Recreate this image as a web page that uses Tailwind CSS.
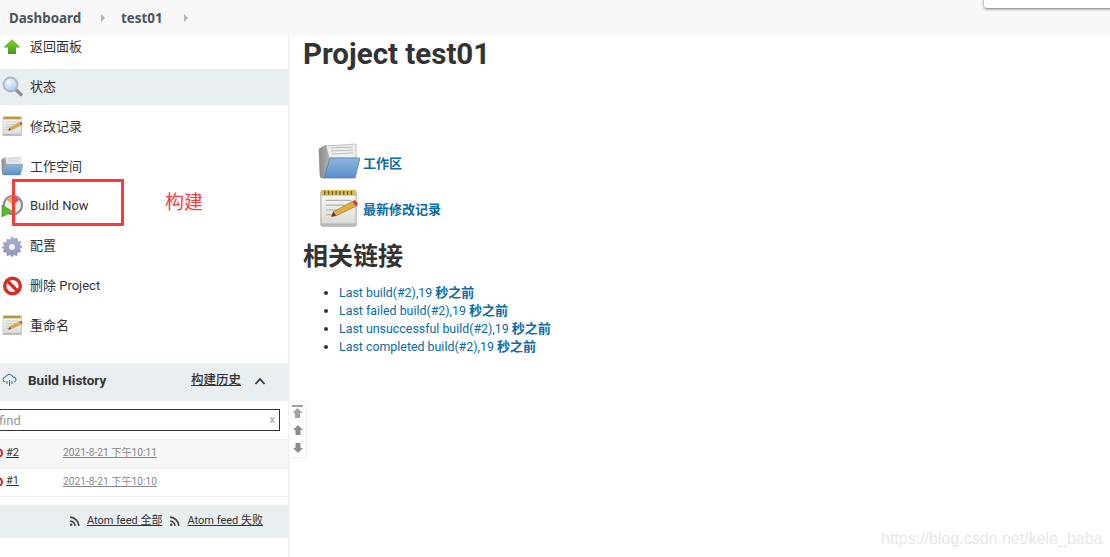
<!DOCTYPE html>
<html lang="zh-CN">
<head>
  <meta charset="UTF-8" />
  <title>test01 - Jenkins</title>
  <script src="https://cdn.jsdelivr.net/npm/@tailwindcss/browser@4"></script>
</head>
<body class="relative h-[557px] w-[1110px] overflow-hidden bg-white font-['Roboto','Noto_Sans_CJK_SC',sans-serif] text-[13px] text-[#333]">

  <svg class="absolute h-0 w-0">
    <defs>
      <linearGradient id="noteEdge" x1="0" y1="0" x2="0" y2="1"><stop offset="0" stop-color="#fbfbf8"/><stop offset="1" stop-color="#d8d8d5"/></linearGradient>
      <linearGradient id="folderBlue" x1="0" y1="0" x2="0" y2="1"><stop offset="0" stop-color="#8fb5df"/><stop offset="1" stop-color="#5a8fca"/></linearGradient>
      <linearGradient id="folderBack" x1="0" y1="0" x2="1" y2="0"><stop offset="0" stop-color="#8a8a8a"/><stop offset="1" stop-color="#b5b5b5"/></linearGradient>
      <linearGradient id="greenUp" x1="0" y1="0" x2="0" y2="1"><stop offset="0" stop-color="#8ed13a"/><stop offset="1" stop-color="#3f9a10"/></linearGradient>
      <linearGradient id="gearFill" x1="0" y1="0" x2="0" y2="1"><stop offset="0" stop-color="#aab4da"/><stop offset="1" stop-color="#9094b6"/></linearGradient>
      <radialGradient id="lens" cx=".35" cy=".3" r=".8"><stop offset="0" stop-color="#eef5fc"/><stop offset="1" stop-color="#a9c8e8"/></radialGradient>
      <symbol id="notepad" viewBox="0 0 42 42">
        <rect x="2" y="2" width="37" height="37" rx="1.500" fill="url(#noteEdge)" stroke="#a5a5a5"/>
        <rect x="2" y="1" width="37" height="6" fill="#d8bd5c"/>
        <path d="M6 2v4M10 2v4M14 2v4M18 2v4M22 2v4M26 2v4M30 2v4M34 2v4" stroke="#6f5a1c" stroke-width="1.500"/>
        <path d="M7 12h27M7 17h20M7 22h14M7 27h8" stroke="#b0b0b0" stroke-width="1.200"/>
        <path d="M13 29 L15 24 L35 13 L39 18 L18 28 Z" fill="#e3aa3f" stroke="#94681a" stroke-width=".6"/>
        <path d="M35 13 L38 11.500 L41 16 L39 18 Z" fill="#d63a2e"/>
        <path d="M13 29 L15 24 L18 28 Z" fill="#444"/>
        <rect x="2" y="36" width="37" height="3" fill="#b8b8b5"/>
      </symbol>
      <symbol id="folder" viewBox="0 0 42 38">
        <path d="M1 6 L8 2 L12 15 L7 35 L4 35 Q2 35 2 32 Z" fill="url(#folderBack)" stroke="#7a7a7a" stroke-width=".5"/>
        <path d="M8 3 L38 1 L38 15 L11 15 Z" fill="#eeeeee" stroke="#a8a8a8" stroke-width=".7"/>
        <path d="M13 5 L35 4 M13 8 L35 7 M14 11 L35 10" stroke="#bdbdbd"/>
        <path d="M12 15 L42 15 L37 35 L6 35 Z" fill="url(#folderBlue)" stroke="#4a78ad" stroke-width=".7"/>
      </symbol>
      <symbol id="buildIcon" viewBox="0 0 24 24">
        <circle cx="13" cy="11" r="10" fill="#f1eee4" stroke="#8d8aa6" stroke-width="2.400"/>
        <path d="M13 11 L6 5 A9 9 0 0 1 15 2 Z" fill="#e8b04a"/>
        <path d="M13 11 L15 2 A9 9 0 0 1 20 5.500 Z" fill="#d9574a"/>
        <path d="M1 11 L13 18 L1 24 Z" fill="#5cb82e" stroke="#3f8a1b" stroke-width=".6"/>
      </symbol>
    </defs>
  </svg>

  <!-- breadcrumb -->
  <header class="relative z-10 flex h-9 items-center bg-[#f8f8f8] pl-[9px] font-['Noto_Sans',sans-serif] text-[13.4px] font-bold text-[#4d545d]">
    <span class="w-[92px]">Dashboard</span>
    <span class="h-0 w-0 border-y-[4px] border-l-[4px] border-y-transparent border-l-[#b4b4b4]"></span>
    <span class="ml-[16px] w-[63px]">test01</span>
    <span class="h-0 w-0 border-y-[4px] border-l-[4px] border-y-transparent border-l-[#b4b4b4]"></span>
    <div class="absolute -top-2 left-[984px] h-4 w-[140px] rounded-[3px] bg-white shadow-[0_1px_3px_rgba(0,0,0,0.55)]"></div>
  </header>

  <div class="flex h-[521px]">
    <!-- side panel -->
    <aside class="flex w-[290px] shrink-0 flex-col border-r-2 border-[#f0f3f5]">
      <nav class="-mt-[7px] flex flex-col gap-[3.75px]">
        <a class="flex h-9 items-center gap-[6px] pl-[3px]">
          <svg class="h-[18px] w-[18px] shrink-0" viewBox="0 0 18 18"><path d="M9 1 L17.500 9.500 L13 9.500 L13 16 L5 16 L5 9.500 L.5 9.500 Z" fill="url(#greenUp)"/></svg>
          <span class="ml-[3px]">返回面板</span>
        </a>
        <a class="flex h-9 items-center gap-[7px] bg-[#e9eef1] pl-[2px]">
          <svg class="h-[21px] w-[21px] shrink-0" viewBox="0 0 21 21"><path d="M13 13 L19 18.500" stroke="#8f8f8f" stroke-width="3.400" stroke-linecap="round"/><circle cx="8.500" cy="8.500" r="7" fill="url(#lens)" stroke="#a9b8c6" stroke-width="1.800"/></svg>
          <span>状态</span>
        </a>
        <a class="flex h-9 items-center gap-[7px] pl-[2px]">
          <svg class="h-[21px] w-[21px] shrink-0"><use href="#notepad"/></svg>
          <span>修改记录</span>
        </a>
        <a class="flex h-9 items-center gap-[7px] pl-[1px]">
          <svg class="h-[21px] w-[22px] shrink-0"><use href="#folder"/></svg>
          <span>工作空间</span>
        </a>
        <a class="flex h-9 items-center gap-[7px] pl-[1px]">
          <svg class="h-[22px] w-[22px] shrink-0"><use href="#buildIcon"/></svg>
          <span>Build Now</span>
        </a>
        <a class="flex h-9 items-center gap-[7px] pl-[1px]">
          <svg class="h-[22px] w-[22px] shrink-0" viewBox="0 0 24 24"><path d="M12 1.500l2 3.200 3.400-1.400.5 3.700 3.700.6-1.400 3.400 3 1.900-3 2.100 1.400 3.400-3.700.5-.6 3.700-3.400-1.400-1.900 2.700-2-2.700-3.400 1.400-.5-3.700-3.700-.6 1.400-3.400L.8 14l3-2-1.400-3.400 3.700-.5.6-3.700 3.400 1.400z" fill="url(#gearFill)" stroke="#8a8fae" stroke-width=".6"/><circle cx="12" cy="13" r="3.200" fill="#f4f4f8"/></svg>
          <span>配置</span>
        </a>
        <a class="flex h-9 items-center gap-[7px] pl-[2px]">
          <svg class="h-[20px] w-[21px] shrink-0" viewBox="0 0 20 20"><circle cx="10" cy="10" r="7.800" fill="#fff" stroke="#d2302a" stroke-width="3.400"/><path d="M4.500 4.500 L15.500 15.500" stroke="#d2302a" stroke-width="3.400"/></svg>
          <span>删除 Project</span>
        </a>
        <a class="flex h-9 items-center gap-[7px] pl-[2px]">
          <svg class="h-[21px] w-[21px] shrink-0"><use href="#notepad"/></svg>
          <span>重命名</span>
        </a>
      </nav>

      <!-- build history -->
      <section class="mt-[19.75px] flex-1">
        <div class="flex h-[38px] items-center bg-[#e9eef1] pb-[3px] pl-[2px] pr-[22px]">
          <svg class="h-[13px] w-[15px]" viewBox="0 0 15 13" fill="none" stroke="#2e6d9e" stroke-width="1"><path d="M3.500 8 A2.500 2.500 0 0 1 3.500 3 A4 4 0 0 1 11 3 A2.500 2.500 0 0 1 12 8"/><path d="M5 7v3M7.500 6v6M10 7v3"/></svg>
          <span class="ml-[11px] text-[13.5px] font-bold text-[#333]">Build History</span>
          <a class="ml-auto text-[12.5px] font-medium underline">构建历史</a>
          <svg class="ml-[13px] h-[10px] w-[12px]" viewBox="0 0 12 10" fill="none" stroke="#333" stroke-width="1.800"><path d="M1.500 8 L6 3 L10.500 8"/></svg>
        </div>
        <div class="-ml-1 mr-[8px] mt-2 flex h-[22px] items-center justify-between border border-[#333] bg-white pl-[2px] pr-[4px] pt-[2px] text-[#999]">
          <span>find</span><span class="-mt-[2px] text-[11px]">x</span>
        </div>
        <div class="mt-2 border-t border-[#eceff1] text-[11px]">
          <div class="flex h-[29px] items-center border-b border-[#eceff1] bg-[#f6f6f6] pb-[2px]">
            <span class="-ml-[7px] h-[10px] w-[10px] rounded-full border-2 border-[#d2202a] bg-white"></span>
            <a class="ml-[3px] w-[57px] underline">#2</a>
            <a class="text-[10.2px] text-[#888] underline">2021-8-21 下午10:11</a>
          </div>
          <div class="flex h-[28px] items-center border-b border-[#eceff1] pb-[2px]">
            <span class="-ml-[7px] h-[10px] w-[10px] rounded-full border-2 border-[#d2202a] bg-white"></span>
            <a class="ml-[3px] w-[57px] underline">#1</a>
            <a class="text-[10.2px] text-[#888] underline">2021-8-21 下午10:10</a>
          </div>
        </div>
        <div class="mt-2 flex h-[33px] items-center justify-end gap-[7px] bg-[#e9eef1] pr-[25px] text-[11px]">
          <svg class="h-[11px] w-[11px]" viewBox="0 0 10 10" fill="none" stroke="#444" stroke-width="1.500"><path d="M1 4.500a5 5 0 0 1 4.500 4.500M1 1a8.500 8.500 0 0 1 8 8"/><circle cx="2" cy="8" r="1.100" fill="#444" stroke="none"/></svg>
          <a class="underline">Atom feed 全部</a>
          <svg class="h-[11px] w-[11px]" viewBox="0 0 10 10" fill="none" stroke="#444" stroke-width="1.500"><path d="M1 4.500a5 5 0 0 1 4.500 4.500M1 1a8.500 8.500 0 0 1 8 8"/><circle cx="2" cy="8" r="1.100" fill="#444" stroke="none"/></svg>
          <a class="underline">Atom feed 失败</a>
        </div>
      </section>
    </aside>

    <!-- main panel -->
    <main class="pl-[13px]">
      <h1 class="text-[29.5px] leading-[36px] font-bold text-[#333]">Project test01</h1>
      <div class="mt-[71px] ml-[15px] flex h-[38px] gap-[3px]">
        <svg class="h-[38px] w-[42px] shrink-0"><use href="#folder"/></svg>
        <a class="pt-[11px] font-semibold text-[#0b6aa2]">工作区</a>
      </div>
      <div class="mt-[8px] ml-[15px] flex h-[40px] gap-[3px]">
        <svg class="h-[40px] w-[42px] shrink-0"><use href="#notepad"/></svg>
        <a class="pt-[11px] font-semibold text-[#0b6aa2]">最新修改记录</a>
      </div>
      <h2 class="mt-[9px] text-[25px] leading-[38px] font-bold text-[#333]">相关链接</h2>
      <ul class="mt-[8px] ml-[36px] list-disc text-[12.4px] leading-[18px] text-[#333]">
        <li><a class="text-[#0b6aa2]">Last build(#2),19 <span class="text-[13px] font-semibold">秒之前</span></a></li>
        <li><a class="text-[#0b6aa2]">Last failed build(#2),19 <span class="text-[13px] font-semibold">秒之前</span></a></li>
        <li><a class="text-[#0b6aa2]">Last unsuccessful build(#2),19 <span class="text-[13px] font-semibold">秒之前</span></a></li>
        <li><a class="text-[#0b6aa2]">Last completed build(#2),19 <span class="text-[13px] font-semibold">秒之前</span></a></li>
      </ul>
    </main>
  </div>

  <!-- scroll buttons over the panel edge -->
  <div class="absolute left-[288px] top-[401px] flex h-[57px] w-[19px] flex-col items-center rounded-[3px] border border-[#eef1f3] bg-white pt-[3px]">
    <svg class="h-[13px] w-[11px]" viewBox="0 0 11 13" fill="#a3a3a3"><path d="M0 0h11v2H0zM5.500 3l5 5H8v5H3V8H.5z"/></svg>
    <svg class="mt-[7px] h-[10px] w-[10px]" viewBox="0 0 10 10" fill="#8c8c8c"><path d="M5 0l5 5H7.500v5h-5V5H0z"/></svg>
    <svg class="mt-[8px] h-[10px] w-[10px]" viewBox="0 0 10 10" fill="#8c8c8c"><path d="M5 10l5-5H7.500V0h-5v5H0z"/></svg>
  </div>

  <!-- red annotation drawn over the screenshot -->
  <div class="absolute left-[12px] top-[179px] h-[47px] w-[112px] border-[3px] border-[#f63d3d]"></div>
  <div class="absolute left-[165px] top-[190px] text-[19px] leading-[26px] text-[#f63d3d]">构建</div>

  <!-- blog watermark -->
  <div class="absolute left-[881px] top-[529px] font-['Liberation_Sans',sans-serif] text-[16px] leading-5 text-[#e6e6e6]">https://blog.csdn.net/kele_baba</div>
</body>
</html>
